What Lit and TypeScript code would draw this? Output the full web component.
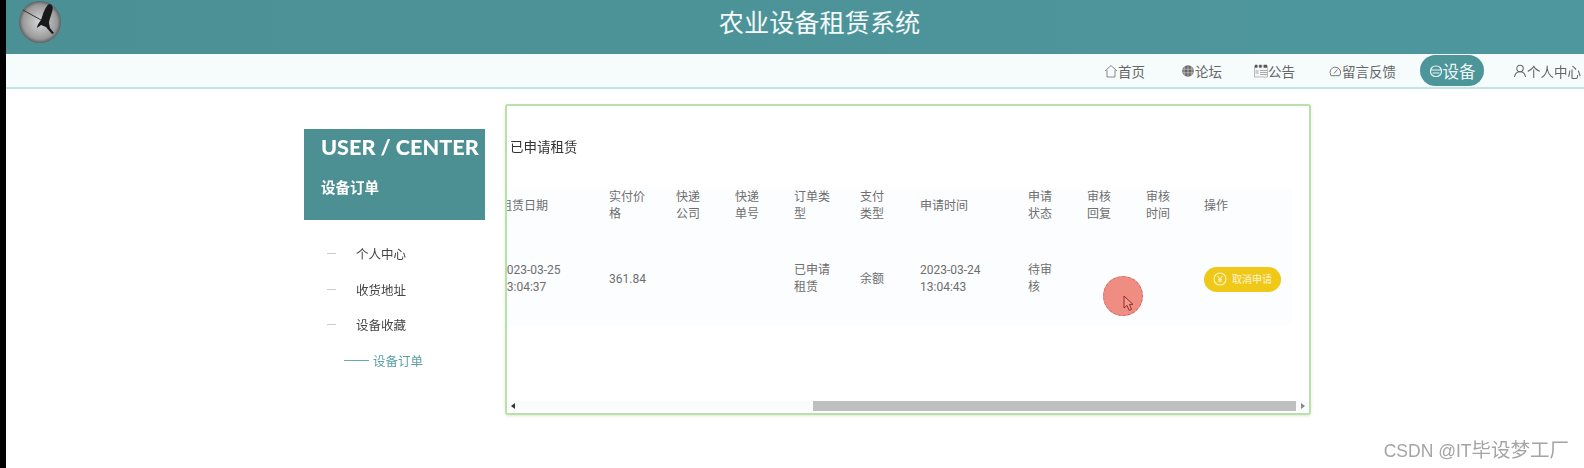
import { LitElement, html, css, svg } from 'lit';
import { customElement } from 'lit/decorators.js';

const icons = {
  home: svg`<path d="M1 7 7 1.5 13 7M3 6v7h8V6" fill="none" stroke="#888" stroke-width="1"/>`,
  forum: svg`<circle cx="7" cy="7" r="5.8" fill="#666"/><path d="M1.5 5.2h11M1.5 8.8h11M7 1.2v11.6M4 2.5c-1.3 3-1.3 6 0 9M10 2.5c1.3 3 1.3 6 0 9" stroke="#ccc" stroke-width=".7" fill="none"/>`,
  notice: svg`<rect x=".5" y="2" width="13" height="11" fill="#f4f6f6" stroke="#aaa" stroke-width=".8"/><path d="M1 .8h2.4v3H1zM5.2.8h2.4v3H5.2zM9.6.8H13v3H9.6z" fill="#555"/><path d="M6 6.5h7M6 8.5h7M6 10.5h7" stroke="#aaa" stroke-width="1"/><rect x="1.5" y="6" width="3" height="4" fill="#ccc"/>`,
  message: svg`<path d="M3 12.2h8.5A5.3 5.3 0 1 0 2 9z" transform="translate(0 -.5)" fill="none" stroke="#777" stroke-width="1"/><path d="m6 9.5 3.5-4" stroke="#777" stroke-width="1"/>`,
  device: svg`<rect x="1.5" y="2" width="11" height="10.5" rx="5" fill="none" stroke="#e8f4f4" stroke-width="1.2"/><path d="M1.5 6h11M3.5 9h7" stroke="#e8f4f4" stroke-width="1.2"/>`,
  user: svg`<circle cx="7" cy="4.5" r="3.2" fill="none" stroke="#666" stroke-width="1.1"/><path d="M1.5 13c.5-3.5 2.5-5.3 5.5-5.3s5 1.8 5.5 5.3" fill="none" stroke="#666" stroke-width="1.1"/>`,
};

const navItems = [
  { label: '首页', icon: icons.home },
  { label: '论坛', icon: icons.forum },
  { label: '公告', icon: icons.notice },
  { label: '留言反馈', icon: icons.message },
  { label: '设备', icon: icons.device, active: true },
  { label: '个人中心', icon: icons.user },
];

const headers = ['租赁日期', '实付价格', '快递公司', '快递单号', '订单类型', '支付类型', '申请时间', '申请状态', '审核回复', '审核时间', '操作'];
const cells = ['2023-03-25 13:04:37', '361.84', '', '', '已申请租赁', '余额', '2023-03-24 13:04:43', '待审核', '', ''];

@customElement('app-root')
export class AppRoot extends LitElement {
  static styles = css`
    :host {
      display: flex;
      position: relative;
      width: 1584px;
      height: 468px;
      overflow: hidden;
      background: #fff;
      font-family: 'Open Sans', 'Noto Sans CJK SC', sans-serif;
      color: #555;
    }
    .edge {
      width: 6px;
      background: #000;
    }
    .main {
      flex: 1;
      min-width: 0;
      filter: blur(0.45px);
    }
    .top {
      display: flex;
      align-items: flex-start;
      height: 54px;
      padding-left: 13px;
      box-sizing: border-box;
      background: linear-gradient(90deg, #4b9094, #4e979e);
      color: #fff;
    }
    .logo {
      width: 42px;
      height: 42px;
      margin-top: 1px;
      border-radius: 50%;
      overflow: hidden;
      flex: none;
    }
    .top h1 {
      flex: 1;
      margin: 7px 6px 0 0;
      font-size: 25.2px;
      font-weight: 400;
      line-height: 30px;
      text-align: center;
      color: #f4fafa;
    }
    .nav {
      display: grid;
      grid-template-columns: 77px 73px 74px 92px 93px 65px;
      justify-content: end;
      align-items: center;
      height: 33px;
      padding-right: 6px;
      background: #f6fcfc;
      border-bottom: 2px solid #c2e4e2;
      font-size: 13.5px;
      color: #666;
    }
    .nav-item {
      display: flex;
      align-items: center;
      white-space: nowrap;
    }
    .nav-item svg {
      width: 14px;
      height: 14px;
      flex: none;
    }
    .nav-item.active {
      width: 64px;
      height: 31px;
      justify-content: center;
      border-radius: 16px;
      background: #4c9599;
      color: #eef8f8;
      font-size: 16.5px;
    }
    .content {
      display: flex;
      align-items: flex-start;
      gap: 20px;
      padding-left: 298px;
    }
    .side {
      width: 181px;
      margin-top: 40px;
    }
    .side-head {
      height: 91px;
      box-sizing: border-box;
      padding: 5px 0 0 17px;
      background: #4c9094;
      color: #fff;
      font-weight: 700;
    }
    .side-head .en {
      font-family: Lato, sans-serif;
      font-size: 21.6px;
      font-weight: 900;
      line-height: 27px;
      white-space: nowrap;
    }
    .side-head .cn {
      margin-top: 16px;
      font-size: 14.5px;
      line-height: 22px;
    }
    .menu {
      margin-top: 16px;
      font-size: 12.5px;
      color: #444;
    }
    .menu-row {
      display: flex;
      align-items: center;
      height: 35.5px;
      padding-left: 23px;
    }
    .menu-row i {
      width: 9px;
      height: 1px;
      margin-right: 20px;
      background: #ccc;
    }
    .menu-row.on {
      padding-left: 40px;
      color: #5a9ea2;
    }
    .menu-row.on i {
      width: 25px;
      margin-right: 4px;
      background: #6aa9ac;
    }
    .panel {
      display: flex;
      flex-direction: column;
      width: 806px;
      height: 311px;
      margin-top: 15px;
      box-sizing: border-box;
      border: 2px solid #bbdfaa;
      border-radius: 3px;
      box-shadow: 0 1px 3px rgba(182, 221, 164, 0.5);
    }
    .panel h2 {
      margin: 31px 0 31px 3px;
      font-size: 13.5px;
      font-weight: 400;
      line-height: 20px;
      color: #333;
    }
    .clip {
      flex: 1;
      overflow: hidden;
    }
    .table {
      display: grid;
      grid-template-columns: 109px 67px 59px 59px 66px 60px 108px 59px 59px 58px 88px;
      grid-template-rows: 36px 74px;
      row-gap: 18px;
      width: 792px;
      margin-left: -7px;
      padding-bottom: 10px;
      background: #fcfdfe;
      font-family: Roboto, 'Noto Sans CJK SC', sans-serif;
      font-size: 12px;
      line-height: 17px;
      color: #6e6e6e;
    }
    .cell {
      display: flex;
      align-items: center;
      padding-right: 26px;
    }
    .cell.action {
      padding-right: 0;
    }
    .btn {
      display: flex;
      align-items: center;
      gap: 5px;
      height: 25px;
      padding: 0 9px;
      border-radius: 13px;
      background: #f0c818;
      color: #fdf6d8;
      font-size: 10px;
      white-space: nowrap;
    }
    .btn svg {
      width: 14px;
      height: 14px;
    }
    .scroll {
      display: flex;
      align-items: center;
      height: 10px;
      margin: 0 0 2px;
      background: #fafbfc;
    }
    .arrow {
      flex: none;
      width: 0;
      height: 0;
      border-top: 3px solid transparent;
      border-bottom: 3px solid transparent;
    }
    .arrow.left {
      margin: 0 298px 0 4px;
      border-right: 4px solid #333;
    }
    .arrow.right {
      margin-left: 5px;
      border-left: 4px solid #888;
    }
    .thumb {
      width: 483px;
      height: 100%;
      background: #bdbfc0;
    }
    .pointer {
      position: absolute;
      left: 1103px;
      top: 276px;
      width: 40px;
      height: 40px;
      box-sizing: border-box;
      border-radius: 50%;
      border: 1px dashed #cf6a62;
      background: #ef8d82;
    }
    .pointer svg {
      display: block;
      width: 14px;
      height: 18px;
      margin: 18px 0 0 19px;
    }
    .mark {
      position: absolute;
      right: 15px;
      top: 439px;
      font-family: 'Liberation Sans', 'Noto Sans CJK SC', sans-serif;
      font-size: 17.5px;
      line-height: 22px;
      color: #a4a4a4;
      white-space: nowrap;
    }
    .mark span {
      font-size: 19.5px;
    }
  `;

  render() {
    return html`
      <div class="edge"></div>
      <div class="main">
        <div class="top">
          <div class="logo">
            <svg viewBox="0 0 42 42" width="42" height="42">
              <defs>
                <radialGradient id="ball" cx="0.5" cy="0.5" r="0.58">
                  <stop offset="0" stop-color="#d8d8d8" />
                  <stop offset="0.7" stop-color="#9a9a9a" />
                  <stop offset="1" stop-color="#2a3032" />
                </radialGradient>
              </defs>
              <rect width="42" height="42" fill="url(#ball)" />
              <path d="M4 9 22 19" stroke="#222" stroke-width="0.9" />
              <path d="M30 3c3 0 5 3 3 8-1 4-3 8-3 11l1 5 4 5-2 1-6-7-5-2-4 3c0-3 2-5 4-8 2-6 4-13 8-16z" fill="#17191b" />
            </svg>
          </div>
          <h1>农业设备租赁系统</h1>
        </div>
        <nav class="nav">
          ${navItems.map(
            (n) => html`<div class="nav-item ${n.active ? 'active' : ''}"><svg viewBox="0 0 14 14">${n.icon}</svg>${n.label}</div>`
          )}
        </nav>
        <div class="content">
          <aside class="side">
            <div class="side-head">
              <div class="en">USER / CENTER</div>
              <div class="cn">设备订单</div>
            </div>
            <div class="menu">
              <div class="menu-row"><i></i>个人中心</div>
              <div class="menu-row"><i></i>收货地址</div>
              <div class="menu-row"><i></i>设备收藏</div>
              <div class="menu-row on"><i></i>设备订单</div>
            </div>
          </aside>
          <section class="panel">
            <h2>已申请租赁</h2>
            <div class="clip">
              <div class="table">
                ${headers.map((h) => html`<div class="cell">${h}</div>`)}
                ${cells.map((c) => html`<div class="cell">${c}</div>`)}
                <div class="cell action">
                  <div class="btn">
                    <svg viewBox="0 0 14 14">
                      <circle cx="7" cy="7" r="6" fill="none" stroke="#fdf3c4" stroke-width="1.1" />
                      <path d="M4.6 3.8 7 7l2.4-3.2M7 7v3.6M5 7.4h4M5 9h4" fill="none" stroke="#fdf3c4" stroke-width="1" />
                    </svg>
                    取消申请
                  </div>
                </div>
              </div>
            </div>
            <div class="scroll">
              <div class="arrow left"></div>
              <div class="thumb"></div>
              <div class="arrow right"></div>
            </div>
          </section>
        </div>
      </div>
      <div class="pointer">
        <svg viewBox="0 0 14 18">
          <path d="M1 1v12l3-2.6 2.2 5 2.4-1-2.2-5H10z" fill="#ef9b90" stroke="#8c2f2a" stroke-width="1" />
        </svg>
      </div>
      <div class="mark">CSDN @IT<span>毕设梦工厂</span></div>
    `;
  }
}
